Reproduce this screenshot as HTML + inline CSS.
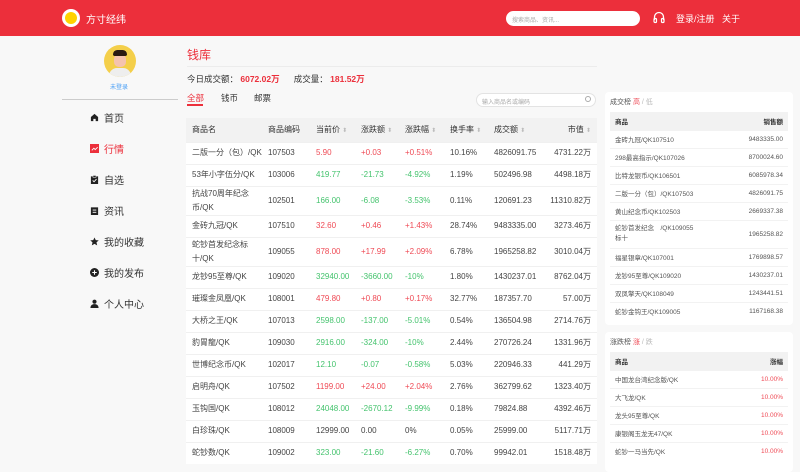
<!DOCTYPE html>
<html><head><meta charset="utf-8"><style>
*{margin:0;padding:0;box-sizing:border-box}
body{width:800px;height:464px;overflow:hidden;background:#f8f8f8;font-family:"Liberation Sans","Noto Sans CJK SC",sans-serif;color:#333;position:relative}
.hd{position:absolute;left:0;top:0;width:800px;height:36px;background:#ec2f3b}
.a{position:absolute;white-space:nowrap}
.mi{position:absolute;left:90px;font-size:10px;color:#333;display:flex;align-items:center}
.mi svg{width:9px;height:9px;margin-right:5px}
table{border-collapse:collapse;font-size:8px;color:#444}
.tb{position:absolute;left:186px;top:118px;width:411px}
.tb th{background:#f2f2f2;height:24px;text-align:left;font-weight:normal;color:#333;padding-left:6px}
.tb td{background:#fff;height:22px;border-top:1px solid #f0f0f0;padding-left:6px;line-height:14px}
.tb td.t{height:28px}
.r{color:#ef4a55}.g{color:#44c36d}
.s{color:#bbb;font-size:6px}
.card{position:absolute;left:605px;width:188px;background:#fff;border-radius:4px}
.card table{margin-left:5px;width:178px;font-size:6.5px}
.card th{background:#f2f2f2;height:18px;font-weight:bold;text-align:left;padding-left:5px;color:#333}
.card td{height:18px;border-top:1px solid #f2f2f2;padding-left:5px;color:#555}
.card .rt{text-align:right;padding-right:5px}
.card td.r{color:#ef4a55}
.ct{font-size:7px;color:#555;padding:5px 0 0 5px;height:20px}
</style></head><body>
<div class="hd"></div>
<div class="a" style="left:62px;top:9px;width:18px;height:18px;border-radius:50%;background:#fff"></div>
<div class="a" style="left:65px;top:12px;width:12px;height:12px;border-radius:50%;background:#ffd200"></div>
<div class="a" style="left:86px;top:11px;font-size:10px;color:#fff">方寸经纬</div>
<div class="a" style="left:506px;top:11px;width:134px;height:15px;border-radius:8px;background:#fff;font-size:6px;color:#aaa;padding:4px 0 0 6px">搜索商品、资讯...</div>
<svg class="a" style="left:653px;top:11px" width="12" height="13" viewBox="0 0 12 13"><path d="M1.5 9V6a4.5 4.5 0 0 1 9 0v3" fill="none" stroke="#fff" stroke-width="1.3"/><rect x="1" y="7.5" width="2.5" height="4" rx="1" fill="none" stroke="#fff" stroke-width="1.2"/><rect x="8.5" y="7.5" width="2.5" height="4" rx="1" fill="none" stroke="#fff" stroke-width="1.2"/></svg>
<div class="a" style="left:676px;top:12px;font-size:9px;color:#fff">登录/注册</div>
<div class="a" style="left:722px;top:12px;font-size:9px;color:#fff">关于</div>

<div class="a" style="left:104px;top:45px;width:32px;height:32px;border-radius:50%;background:#f4cf4a;overflow:hidden">
<div style="position:absolute;left:10px;top:9px;width:12px;height:13px;border-radius:5px;background:#f5c3ae"></div>
<div style="position:absolute;left:9px;top:5px;width:14px;height:6px;border-radius:5px 5px 2px 2px;background:#2a1a12"></div>
<div style="position:absolute;left:5px;top:23px;width:22px;height:12px;border-radius:8px 8px 0 0;background:#eee"></div>
</div>
<div class="a" style="left:110px;top:82px;font-size:6px;color:#4a9ff5">未登录</div>
<div class="a" style="left:62px;top:99px;width:116px;height:1px;background:#ccc"></div>

<div class="mi" style="top:110px"><svg viewBox="0 0 10 10"><path d="M1 9V4.5L5 1l4 3.5V9H6.3V6.5H3.7V9z" fill="#222"/></svg>首页</div>
<div class="mi" style="top:141px;color:#ec2f3b"><svg viewBox="0 0 10 10"><rect width="10" height="10" fill="#ec2f3b"/><path d="M2 7l2.3-2.3 1.5 1.5L8.5 3.5" stroke="#fff" fill="none" stroke-width="1"/></svg>行情</div>
<div class="mi" style="top:172px"><svg viewBox="0 0 10 10"><rect x="1" y="1.5" width="8" height="8.5" fill="#222"/><rect x="3.3" y=".5" width="3.4" height="2" fill="#222" stroke="#f8f8f8" stroke-width=".6"/><path d="M3 6l1.5 1.5L7.2 4.5" stroke="#fff" fill="none" stroke-width="1"/></svg>自选</div>
<div class="mi" style="top:203px"><svg viewBox="0 0 10 10"><rect x="1" y="1.5" width="8" height="8.5" fill="#222"/><rect x="3" y="4" width="4" height="1" fill="#fff"/><rect x="3" y="6.5" width="4" height="1" fill="#fff"/></svg>资讯</div>
<div class="mi" style="top:234px"><svg viewBox="0 0 10 10"><path d="M5 .5l1.4 3 3.3.3-2.5 2.2.8 3.3L5 7.6 2 9.3l.8-3.3L.3 3.8l3.3-.3z" fill="#222"/></svg>我的收藏</div>
<div class="mi" style="top:265px"><svg viewBox="0 0 10 10"><circle cx="5" cy="5" r="5" fill="#222"/><path d="M5 2.5v5M2.5 5h5" stroke="#fff" stroke-width="1.2"/></svg>我的发布</div>
<div class="mi" style="top:296px"><svg viewBox="0 0 10 10"><circle cx="5" cy="3" r="2.3" fill="#222"/><path d="M.5 10c0-3 2-4.3 4.5-4.3S9.5 7 9.5 10z" fill="#222"/></svg>个人中心</div>

<div class="a" style="left:187px;top:46px;font-size:12px;color:#ec2f3b">钱库</div>
<div class="a" style="left:187px;top:66px;width:410px;height:1px;background:#ececec"></div>
<div class="a" style="left:187px;top:73px;font-size:8.5px;color:#333">今日成交额：&nbsp;<b style="color:#ec2f3b">6072.02万</b>&nbsp;&nbsp;&nbsp;&nbsp;&nbsp;&nbsp;成交量：&nbsp;<b style="color:#ec2f3b">181.52万</b></div>
<div class="a" style="left:187px;top:92px;font-size:8.5px;color:#ec2f3b">全部</div>
<div class="a" style="left:187px;top:104px;width:16px;height:2px;background:#ec2f3b"></div>
<div class="a" style="left:221px;top:92px;font-size:8.5px">钱币</div>
<div class="a" style="left:254px;top:92px;font-size:8.5px">邮票</div>
<div class="a" style="left:476px;top:93px;width:120px;height:14px;border:1px solid #e3e3e3;border-radius:7px;background:#fff;font-size:6px;color:#aaa;padding:3px 0 0 5px">输入商品名或编码<span style="position:absolute;right:4px;top:2px;width:6px;height:6px;border:1px solid #aaa;border-radius:50%"></span></div>

<table class="tb">
<tr><th style="width:76px">商品名</th><th style="width:48px">商品编码</th><th style="width:45px">当前价 <span class="s">⬍</span></th><th style="width:44px">涨跌额 <span class="s">⬍</span></th><th style="width:45px">涨跌幅 <span class="s">⬍</span></th><th style="width:44px">换手率 <span class="s">⬍</span></th><th style="width:52px">成交额 <span class="s">⬍</span></th><th style="text-align:right;padding-right:6px">市值 <span class="s">⬍</span></th></tr>
<tr><td>二版一分（包）/QK</td><td>107503</td><td class="r">5.90</td><td class="r">+0.03</td><td class="r">+0.51%</td><td>10.16%</td><td>4826091.75</td><td style="text-align:right;padding-right:6px">4731.22万</td></tr>
<tr><td>53年小字伍分/QK</td><td>103006</td><td class="g">419.77</td><td class="g">-21.73</td><td class="g">-4.92%</td><td>1.19%</td><td>502496.98</td><td style="text-align:right;padding-right:6px">4498.18万</td></tr>
<tr><td class="t">抗战70周年纪念<br>币/QK</td><td>102501</td><td class="g">166.00</td><td class="g">-6.08</td><td class="g">-3.53%</td><td>0.11%</td><td>120691.23</td><td style="text-align:right;padding-right:6px">11310.82万</td></tr>
<tr><td>金砖九冠/QK</td><td>107510</td><td class="r">32.60</td><td class="r">+0.46</td><td class="r">+1.43%</td><td>28.74%</td><td>9483335.00</td><td style="text-align:right;padding-right:6px">3273.46万</td></tr>
<tr><td class="t">蛇钞首发纪念标<br>十/QK</td><td>109055</td><td class="r">878.00</td><td class="r">+17.99</td><td class="r">+2.09%</td><td>6.78%</td><td>1965258.82</td><td style="text-align:right;padding-right:6px">3010.04万</td></tr>
<tr><td>龙钞95至尊/QK</td><td>109020</td><td class="g">32940.00</td><td class="g">-3660.00</td><td class="g">-10%</td><td>1.80%</td><td>1430237.01</td><td style="text-align:right;padding-right:6px">8762.04万</td></tr>
<tr><td>璀璨金凤凰/QK</td><td>108001</td><td class="r">479.80</td><td class="r">+0.80</td><td class="r">+0.17%</td><td>32.77%</td><td>187357.70</td><td style="text-align:right;padding-right:6px">57.00万</td></tr>
<tr><td>大桥之王/QK</td><td>107013</td><td class="g">2598.00</td><td class="g">-137.00</td><td class="g">-5.01%</td><td>0.54%</td><td>136504.98</td><td style="text-align:right;padding-right:6px">2714.76万</td></tr>
<tr><td>豹胃龍/QK</td><td>109030</td><td class="g">2916.00</td><td class="g">-324.00</td><td class="g">-10%</td><td>2.44%</td><td>270726.24</td><td style="text-align:right;padding-right:6px">1331.96万</td></tr>
<tr><td>世博纪念币/QK</td><td>102017</td><td class="g">12.10</td><td class="g">-0.07</td><td class="g">-0.58%</td><td>5.03%</td><td>220946.33</td><td style="text-align:right;padding-right:6px">441.29万</td></tr>
<tr><td>启明舟/QK</td><td>107502</td><td class="r">1199.00</td><td class="r">+24.00</td><td class="r">+2.04%</td><td>2.76%</td><td>362799.62</td><td style="text-align:right;padding-right:6px">1323.40万</td></tr>
<tr><td>玉钩国/QK</td><td>108012</td><td class="g">24048.00</td><td class="g">-2670.12</td><td class="g">-9.99%</td><td>0.18%</td><td>79824.88</td><td style="text-align:right;padding-right:6px">4392.46万</td></tr>
<tr><td>白珍珠/QK</td><td>108009</td><td>12999.00</td><td>0.00</td><td>0%</td><td>0.05%</td><td>25999.00</td><td style="text-align:right;padding-right:6px">5117.71万</td></tr>
<tr><td>蛇钞数/QK</td><td>109002</td><td class="g">323.00</td><td class="g">-21.60</td><td class="g">-6.27%</td><td>0.70%</td><td>99942.01</td><td style="text-align:right;padding-right:6px">1518.48万</td></tr>
</table>

<div class="card" style="top:92px;height:233px">
<div class="ct">成交榜 <span style="color:#ef4a55">高</span> <span style="color:#bbb">/ 低</span></div>
<table>
<tr><th>商品</th><th class="rt" style="text-align:right">销售额</th></tr>
<tr><td>金砖九冠/QK107510</td><td class="rt">9483335.00</td></tr>
<tr><td>298最高指示/QK107026</td><td class="rt">8700024.60</td></tr>
<tr><td>比特龙银币/QK106501</td><td class="rt">6085978.34</td></tr>
<tr><td>二版一分（包）/QK107503</td><td class="rt">4826091.75</td></tr>
<tr><td>黄山纪念币/QK102503</td><td class="rt">2669337.38</td></tr>
<tr><td style="height:28px;line-height:10px">蛇钞首发纪念　/QK109055<br>标十</td><td class="rt">1965258.82</td></tr>
<tr><td>福星银章/QK107001</td><td class="rt">1769898.57</td></tr>
<tr><td>龙钞95至尊/QK109020</td><td class="rt">1430237.01</td></tr>
<tr><td>双凤擎天/QK108049</td><td class="rt">1243441.51</td></tr>
<tr><td>蛇钞金钩王/QK109005</td><td class="rt">1167168.38</td></tr>
</table></div>

<div class="card" style="top:332px;height:140px">
<div class="ct">涨跌榜 <span style="color:#ef4a55">涨</span> <span style="color:#bbb">/ 跌</span></div>
<table>
<tr><th>商品</th><th class="rt" style="text-align:right">涨幅</th></tr>
<tr><td>中国龙台湾纪念版/QK</td><td class="rt r">10.00%</td></tr>
<tr><td>大飞龙/QK</td><td class="rt r">10.00%</td></tr>
<tr><td>龙头95至尊/QK</td><td class="rt r">10.00%</td></tr>
<tr><td>康银阁玉龙无47/QK</td><td class="rt r">10.00%</td></tr>
<tr><td>蛇钞一马当先/QK</td><td class="rt r">10.00%</td></tr>
</table></div>
</body></html>
